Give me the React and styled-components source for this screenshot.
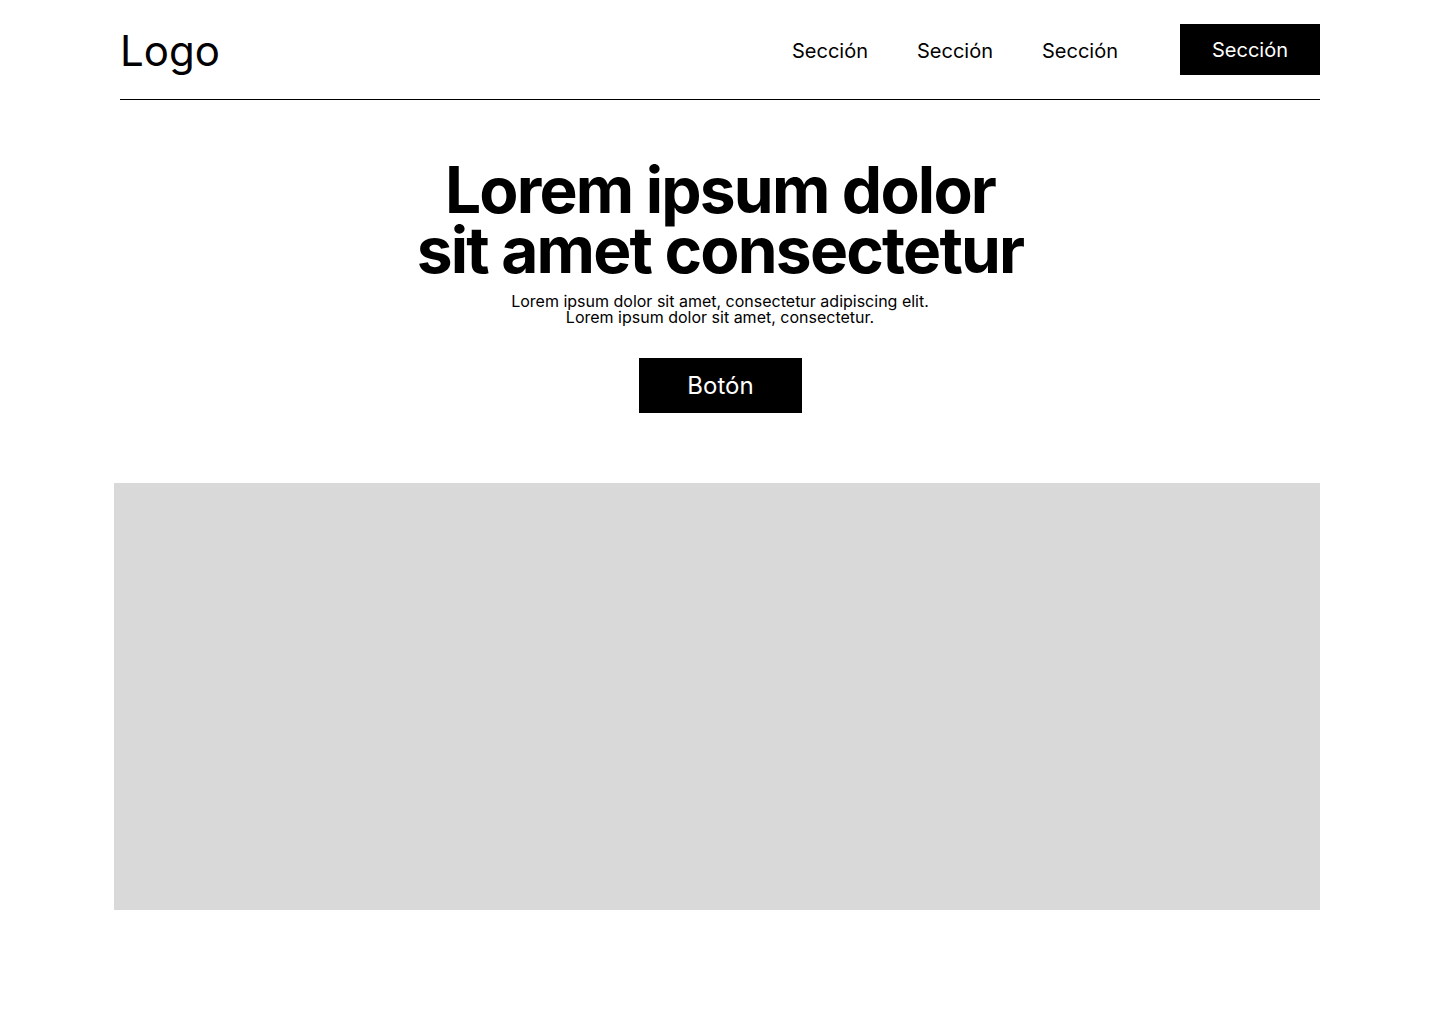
import styled, { createGlobalStyle } from "styled-components";

const GlobalStyle = createGlobalStyle`
  body {
    margin: 0;
    background: #fff;
    font-family: Inter, "Noto Sans", sans-serif;
    color: #000;
  }
`;

const Page = styled.div`
  width: 1200px;
  margin: 0 auto;
  padding-bottom: 112px;
`;

const Header = styled.header`
  height: 100px;
  box-sizing: border-box;
  border-bottom: 1px solid #000;
  display: flex;
  justify-content: space-between;
  align-items: center;
`;

const Logo = styled.div`
  font-size: 42px;
  font-weight: 400;
  line-height: 1;
  padding-top: 2px;
`;

const Nav = styled.nav`
  display: flex;
  align-items: center;
`;

const NavLink = styled.a`
  font-size: 20px;
  line-height: 1;
  padding-top: 3px;
  color: #000;
  text-decoration: none;
  margin-right: 49px;
  &:last-of-type {
    margin-right: 62px;
  }
`;

const NavButton = styled.button`
  width: 140px;
  height: 51px;
  background: #000;
  color: #fff;
  border: none;
  font-family: inherit;
  font-size: 20px;
  padding: 0;
`;

const Hero = styled.section`
  display: flex;
  flex-direction: column;
  align-items: center;
  text-align: center;
  padding-top: 60px;
`;

const Title = styled.h1`
  margin: 0;
  font-size: 64px;
  font-weight: 700;
  line-height: 60px;
  letter-spacing: -1.8px;
`;

const Subtitle = styled.p`
  margin: 13px 0 0;
  font-size: 16px;
  line-height: 16px;
`;

const MainButton = styled.button`
  margin-top: 33px;
  width: 163px;
  height: 55px;
  background: #000;
  color: #fff;
  border: none;
  font-family: inherit;
  font-size: 24px;
  padding: 0 0 0 1px;
`;

const Picture = styled.div`
  margin: 70px 0 0 -6px;
  width: 1206px;
  height: 427px;
  background: #d9d9d9;
`;

function App() {
  return (
    <>
      <GlobalStyle />
      <Page>
        <Header>
          <Logo>Logo</Logo>
          <Nav>
            <NavLink>Sección</NavLink>
            <NavLink>Sección</NavLink>
            <NavLink>Sección</NavLink>
            <NavButton>Sección</NavButton>
          </Nav>
        </Header>
        <Hero>
          <Title>
            Lorem ipsum dolor
            <br />
            sit amet consectetur
          </Title>
          <Subtitle>
            Lorem ipsum dolor sit amet, consectetur adipiscing elit.
            <br />
            Lorem ipsum dolor sit amet, consectetur.
          </Subtitle>
          <MainButton>Botón</MainButton>
        </Hero>
        <Picture />
      </Page>
    </>
  );
}

export default App;
